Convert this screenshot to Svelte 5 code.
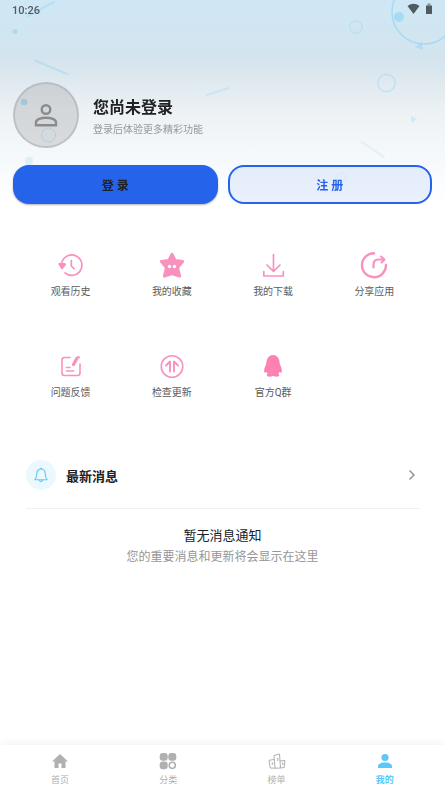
<script>
  const actions = [
    { id: 'history', label: '观看历史' },
    { id: 'favorite', label: '我的收藏' },
    { id: 'download', label: '我的下载' },
    { id: 'share', label: '分享应用' },
    { id: 'feedback', label: '问题反馈' },
    { id: 'update', label: '检查更新' },
    { id: 'group', label: '官方Q群' }
  ];
  const tabs = [
    { id: 'home', label: '首页' },
    { id: 'category', label: '分类' },
    { id: 'rank', label: '榜单' },
    { id: 'mine', label: '我的' }
  ];
  let current = $state('mine');
</script>

<div class="page">
  <header>
    <svg class="decor" viewBox="0 0 445 220" preserveAspectRatio="xMidYMin slice" aria-hidden="true">
      <g fill="none" stroke="#8fd2f5" stroke-linecap="round">
        <g stroke-width="2" opacity=".38">
          <path d="M28 16 54 2M35 60.500 67 74" />
          <path d="M207 95 229 88" opacity=".7" />
          <path d="M362 142 384 157" opacity=".5" />
        </g>
        <circle cx="424" cy="12" r="32" stroke-width="1.500" opacity=".6" />
        <circle cx="356" cy="27" r="6.200" opacity=".45" />
        <circle cx="386.500" cy="83" r="8.700" stroke-width="1.200" opacity=".45" />
        <circle cx="48.500" cy="135" r="7" opacity=".5" />
        <circle cx="341" cy="178" r="5" opacity=".15" />
      </g>
      <g fill="#8bd3f5">
        <circle cx="15" cy="31.500" r="2.600" opacity=".55" />
        <circle cx="24" cy="102" r="3.300" opacity=".8" />
        <circle cx="29" cy="161" r="4.200" opacity=".25" />
        <circle cx="399" cy="17" r="5" opacity=".6" />
        <path d="m415 47 7-5 1 8z" opacity=".45" />
        <path d="m411 116 6 3-5.500 4z" opacity=".3" />
      </g>
    </svg>

    <div class="status">
      <span>10:26</span>
      <svg width="26" height="12" viewBox="0 0 26 12" fill="#515a60" aria-hidden="true">
        <path d="M.5 3Q6.500-1.500 12.500 3L6.500 11z" />
        <path d="M19 2.500h6V11h-6z" />
        <path d="M20.500.5h3v2h-3z" opacity=".6" />
      </svg>
    </div>

    <section class="profile">
      <div class="avatar">
        <svg width="24" height="24" viewBox="0 0 24 24" fill="none" stroke="#8a8b8d" stroke-width="2.400" aria-hidden="true">
          <circle cx="12" cy="6.500" r="4.300" />
          <path d="M2 22.200v-3c0-3 5.500-4.500 10-4.500s10 1.500 10 4.500v3z" />
        </svg>
      </div>
      <div class="who">
        <h1>您尚未登录</h1>
        <p>登录后体验更多精彩功能</p>
      </div>
    </section>

    <div class="auth">
      <button class="login">登 录</button>
      <button class="register">注 册</button>
    </div>
  </header>

  <section class="grid">
    {#each actions as a}
      <button>
        <svg width="28" height="28" viewBox="0 0 28 28" fill="none" stroke="#f991bf" stroke-width="1.700" stroke-linecap="round" stroke-linejoin="round" aria-hidden="true">
          {#if a.id === 'history'}
            <path d="M5 11A10.200 10.200 0 1 1 8 21.800M14.300 9.500v5.500l2.700 2.700" />
            <path d="M2.300 13q1.500-1.300 3 0 1.700-1 3 .5L5 17.500z" fill="#f991bf" />
          {:else if a.id === 'favorite'}
            <path d="M14 3.500 17 9.500l7.500 1-5 6L21.500 25 14 22.500 6.500 25l2-8.500-5-6 7.500-1z" fill="#f991bf" stroke-width="3.200" />
            <circle cx="11.500" cy="15.500" r="1.700" fill="#fff" stroke="none" />
            <circle cx="16.500" cy="15.500" r="1.700" fill="#fff" stroke="none" />
          {:else if a.id === 'download'}
            <path d="M14.500 3.500v16.500M8 14l6.500 6.500L21 14M4.800 20.500V25h19.500v-4.500" />
          {:else if a.id === 'share'}
            <path d="M14 2.200A12 12 0 1 0 26 14" stroke-width="2.400" />
            <path d="M13.500 16.500v-3q0-5 5-5h5" stroke-width="2.200" />
            <path d="m21 5.500 3.500 3-3 3" stroke-width="2" />
          {:else if a.id === 'feedback'}
            <path d="M13 5.500H7.500Q5 5.500 5 8v13q0 2.500 2.500 2.500h13q2.500 0 2.500-2.500v-9M9.500 15.500h3.500M9.500 19h7" stroke-width="1.600" />
            <path d="m19.800 6.500-3.300 6" stroke-width="3.200" /><path d="m21 4.800 1.200.7" />
          {:else if a.id === 'update'}
            <circle cx="14" cy="14.500" r="10.800" stroke-width="1.500" />
            <path d="M12 19.500V9.500L8 13.500M16 19.500V9.500l4 4" stroke-width="1.900" />
          {:else}
            <path d="M8 12C8 1 20 1 20 12c0 1 2.500 4.500 2 7.500-.5.800-1.500-.5-2-1-.3 1.500-1 2.500-1.500 3 2.500 2.500-.5 3-4.500 1.500-4 1.500-7 1-4.500-1.500-.5-.5-1.200-1.500-1.500-3-.5.500-1.500 1.800-2 1C5.500 16.500 8 13 8 12z" fill="#fd82b2" stroke="#fd82b2" />
          {/if}
        </svg>
        <span>{a.label}</span>
      </button>
    {/each}
  </section>

  <section class="news">
    <button class="news-head">
      <span class="bell">
        <svg width="16" height="16" viewBox="0 0 16 16" fill="none" stroke="#63c7f6" stroke-width="1.100" stroke-linecap="round" stroke-linejoin="round" aria-hidden="true">
          <path d="M1.800 12.700c1.500-1.500 2-3.500 2-5.700 0-3.200 1.700-5 4.200-5s4.200 1.800 4.200 5c0 2.200.5 4.200 2 5.700zM6.200 13q1.800 3.500 3.600 0M7.500 1.200h1" />
        </svg>
      </span>
      <span class="title">最新消息</span>
      <svg width="14" height="14" viewBox="0 0 14 14" fill="none" stroke="#8c8c8c" stroke-width="1.400" aria-hidden="true">
        <path d="m4.500 2.500 4.500 4.500-4.500 4.500" />
      </svg>
    </button>
    <div class="empty">
      <h2>暂无消息通知</h2>
      <p>您的重要消息和更新将会显示在这里</p>
    </div>
  </section>

  <nav>
    {#each tabs as t}
      <button class:active={current === t.id} onclick={() => (current = t.id)}>
        <svg width="18" height="18" viewBox="0 0 18 18" fill="currentColor" aria-hidden="true">
          {#if t.id === 'home'}
            <path d="M9 2 1 9.500h2.500V16h4v-4.500h3V16h4V9.500H17z" />
          {:else if t.id === 'category'}
            <rect x=".7" y="1" width="8" height="7.800" rx="3" />
            <rect x="9.300" y="1" width="8" height="7.800" rx="3" />
            <rect x=".7" y="9.400" width="8" height="7.800" rx="3" />
            <circle cx="13.300" cy="13.300" r="3.100" fill="none" stroke="currentColor" stroke-width="1.500" />
          {:else if t.id === 'rank'}
            <g fill="none" stroke="currentColor" stroke-linejoin="round">
              <path d="M6 3.500 11.500 2l1 14-5.500.2zM6.300 7.500 1 8.300 2.200 16l4.800.2M12 9l5-.5-.8 7-3.700.5M9 6.500l.8-.5v3M3.500 11h1.500l-1 2M14 11h1.200l-.5 2" />
            </g>
          {:else}
            <circle cx="9" cy="5.500" r="3.600" />
            <path d="M2 16v-1.500c0-3 3.500-4 7-4s7 1 7 4V16z" />
          {/if}
        </svg>
        <span>{t.label}</span>
      </button>
    {/each}
  </nav>
</div>

<style>
  :global(body) {
    margin: 0;
    background: #fff;
  }
  .page {
    display: flex;
    flex-direction: column;
    min-height: 100vh;
    font-family: Roboto, 'Noto Sans CJK SC', sans-serif;
    color: #202124;
  }
  h1, h2, p {
    margin: 0;
  }
  button {
    margin: 0;
    padding: 0;
    border: 0;
    background: none;
    font: inherit;
    color: inherit;
    cursor: pointer;
  }
  svg {
    display: block;
    flex: none;
  }
  header {
    position: relative;
    padding-bottom: 12px;
    background: linear-gradient(#cfe7f5, #d3e4ee 56px, #dbe7ee 74px, #ecf1f4 110px, #f4f8fb 150px, #fff 206px);
  }
  .decor {
    position: absolute;
    top: 0;
    left: 0;
    width: 100%;
    height: 220px;
  }
  .status {
    position: relative;
    display: flex;
    align-items: center;
    justify-content: space-between;
    height: 20px;
    padding: 0 12px;
    font-size: 11px;
    font-weight: 500;
    color: #515a60;
  }
  .status svg {
    margin-bottom: 2px;
  }
  .profile {
    position: relative;
    display: flex;
    align-items: center;
    gap: 14px;
    padding: 62px 13px 0;
  }
  .avatar {
    display: flex;
    align-items: center;
    justify-content: center;
    box-sizing: border-box;
    width: 66px;
    height: 66px;
    border: 2px solid rgba(150, 158, 166, 0.4);
    border-radius: 50%;
    background: rgba(165, 165, 170, 0.35);
  }
  .who {
    padding-top: 6px;
  }
  h1 {
    font-size: 16px;
    line-height: 24px;
    font-weight: 700;
  }
  .profile p {
    font-size: 10px;
    line-height: 20px;
    color: #97999b;
  }
  .auth {
    position: relative;
    display: grid;
    grid-template-columns: 1fr 1fr;
    gap: 10px;
    padding: 17px 13px 0;
  }
  .auth button {
    box-sizing: border-box;
    height: 39px;
    border-radius: 16px;
    font-size: 12px;
    font-weight: 700;
  }
  .login {
    background: #2563eb;
    box-shadow: 0 1px 2px rgba(0, 0, 0, 0.3);
  }
  .auth .register {
    border: 2px solid #2563eb;
    background: rgba(37, 99, 235, 0.09);
    color: #2563eb;
  }
  .grid {
    display: grid;
    grid-template-columns: repeat(4, 1fr);
    grid-auto-rows: 101px;
    padding: 9px 20px 0;
  }
  .grid button {
    display: flex;
    flex-direction: column;
    align-items: center;
    justify-content: center;
    gap: 5px;
    font-size: 10px;
    line-height: 16px;
    color: #5c5c5c;
  }
  .news {
    flex: 1;
    padding: 33px 26px 0;
  }
  .news-head {
    display: flex;
    align-items: center;
    gap: 10px;
    width: 100%;
    padding-bottom: 18px;
    border-bottom: 1px solid #f0f0f0;
  }
  .bell {
    display: flex;
    align-items: center;
    justify-content: center;
    width: 30px;
    height: 30px;
    border-radius: 50%;
    background: #ebf8fe;
  }
  .title {
    flex: 1;
    text-align: left;
    font-size: 13px;
    font-weight: 700;
  }
  .empty {
    padding: 16px 0;
    text-align: center;
  }
  h2 {
    font-size: 13px;
    line-height: 22px;
    font-weight: 400;
  }
  .empty p {
    font-size: 12px;
    line-height: 20px;
    color: #969696;
  }
  nav {
    position: sticky;
    bottom: 0;
    display: flex;
    padding: 7px 6px 4px;
    background: #fff;
    box-shadow: 0 -1px 8px rgba(0, 0, 0, 0.06);
  }
  nav button {
    flex: 1;
    display: flex;
    flex-direction: column;
    align-items: center;
    gap: 3px;
    font-size: 9px;
    line-height: 14px;
    color: #b0b0b0;
  }
  nav .active {
    color: #5ac8fa;
    font-weight: 700;
  }
</style>
